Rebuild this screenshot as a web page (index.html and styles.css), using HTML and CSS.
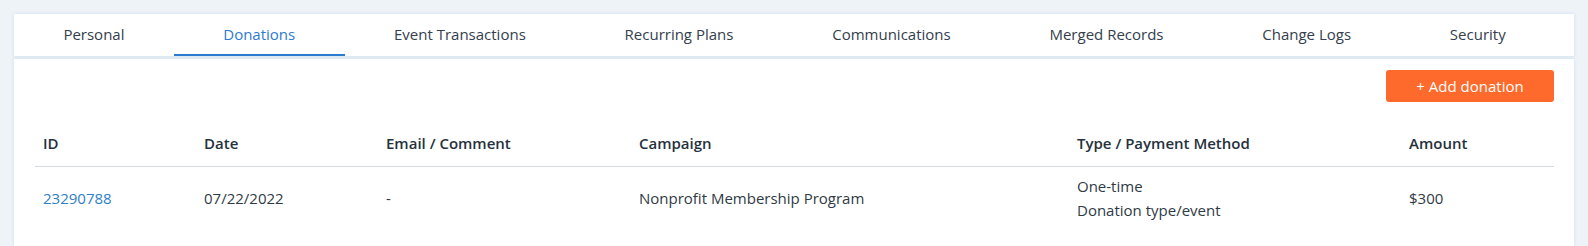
FILE: index.html
```html
<!DOCTYPE html>
<html lang="en">
<head>
<meta charset="utf-8">
<title>Donations</title>
<link rel="stylesheet" href="styles.css">
</head>
<body>
<div class="page">
  <nav class="tabs">
    <a class="tab">Personal</a>
    <a class="tab active">Donations</a>
    <a class="tab">Event Transactions</a>
    <a class="tab">Recurring Plans</a>
    <a class="tab">Communications</a>
    <a class="tab">Merged Records</a>
    <a class="tab">Change Logs</a>
    <a class="tab">Security</a>
  </nav>
  <section class="panel">
    <div class="toolbar">
      <button class="btn-add">+ Add donation</button>
    </div>
    <table class="grid">
      <colgroup>
        <col class="c-id"><col class="c-date"><col class="c-email"><col class="c-camp"><col class="c-type"><col class="c-amt">
      </colgroup>
      <thead>
        <tr>
          <th>ID</th>
          <th>Date</th>
          <th>Email / Comment</th>
          <th>Campaign</th>
          <th>Type / Payment Method</th>
          <th>Amount</th>
        </tr>
      </thead>
      <tbody>
        <tr>
          <td><a class="link">23290788</a></td>
          <td>07/22/2022</td>
          <td>-</td>
          <td>Nonprofit Membership Program</td>
          <td><div class="line">One-time</div><div class="line">Donation type/event</div></td>
          <td>$300</td>
        </tr>
      </tbody>
    </table>
  </section>
</div>
</body>
</html>
```
FILE: styles.css
```css
html, body {
  margin: 0;
  padding: 0;
  overflow: hidden;
}
body {
  background: #eef3f8;
  font-family: "Open Sans", Lato, sans-serif;
  color: #2b3642;
  height: 246px;
  width: 1588px;
}
.page {
  width: 1588px;
  box-sizing: border-box;
  padding: 14px 14px 0 14px;
}
.tabs {
  display: flex;
  background: #fff;
  height: 42px;
  box-shadow: 0 0 3px rgba(170, 200, 230, 0.5);
}
.tab {
  display: block;
  padding: 10px 49.4px 0;
  font-size: 15px;
  line-height: 20px;
  color: #33404d;
  box-sizing: border-box;
  height: 42px;
  white-space: nowrap;
}
.tab.active {
  color: #2b7bcf;
  border-bottom: 2px solid #2b7bd0;
}
.panel {
  margin-top: 3px;
  background: #fff;
  padding: 11px 20px 0 21px;
  height: 176px;
  box-shadow: 0 0 3px rgba(170, 200, 230, 0.5);
}
.toolbar {
  display: flex;
  justify-content: flex-end;
}
.btn-add {
  width: 168px;
  height: 32px;
  background: #fd6a2b;
  color: #fff;
  border: none;
  border-radius: 3px;
  font-family: "Open Sans", Lato, sans-serif;
  font-size: 15px;
  padding: 0;
}
.grid {
  width: 100%;
  margin-top: 17px;
  border-collapse: collapse;
  table-layout: fixed;
  font-size: 15px;
}
.c-id { width: 161px; }
.c-date { width: 182px; }
.c-email { width: 253px; }
.c-camp { width: 438px; }
.c-type { width: 332px; }
.c-amt { width: auto; }
.grid th {
  text-align: left;
  font-weight: 600;
  color: #25313d;
  height: 47px;
  padding: 0 8px;
  border-bottom: 1px solid #d3dce5;
  vertical-align: middle;
}
.grid td {
  padding: 7px 8px;
  color: #2f3a45;
  vertical-align: middle;
  line-height: 24px;
}
.link {
  color: #2d80c8;
}
```
